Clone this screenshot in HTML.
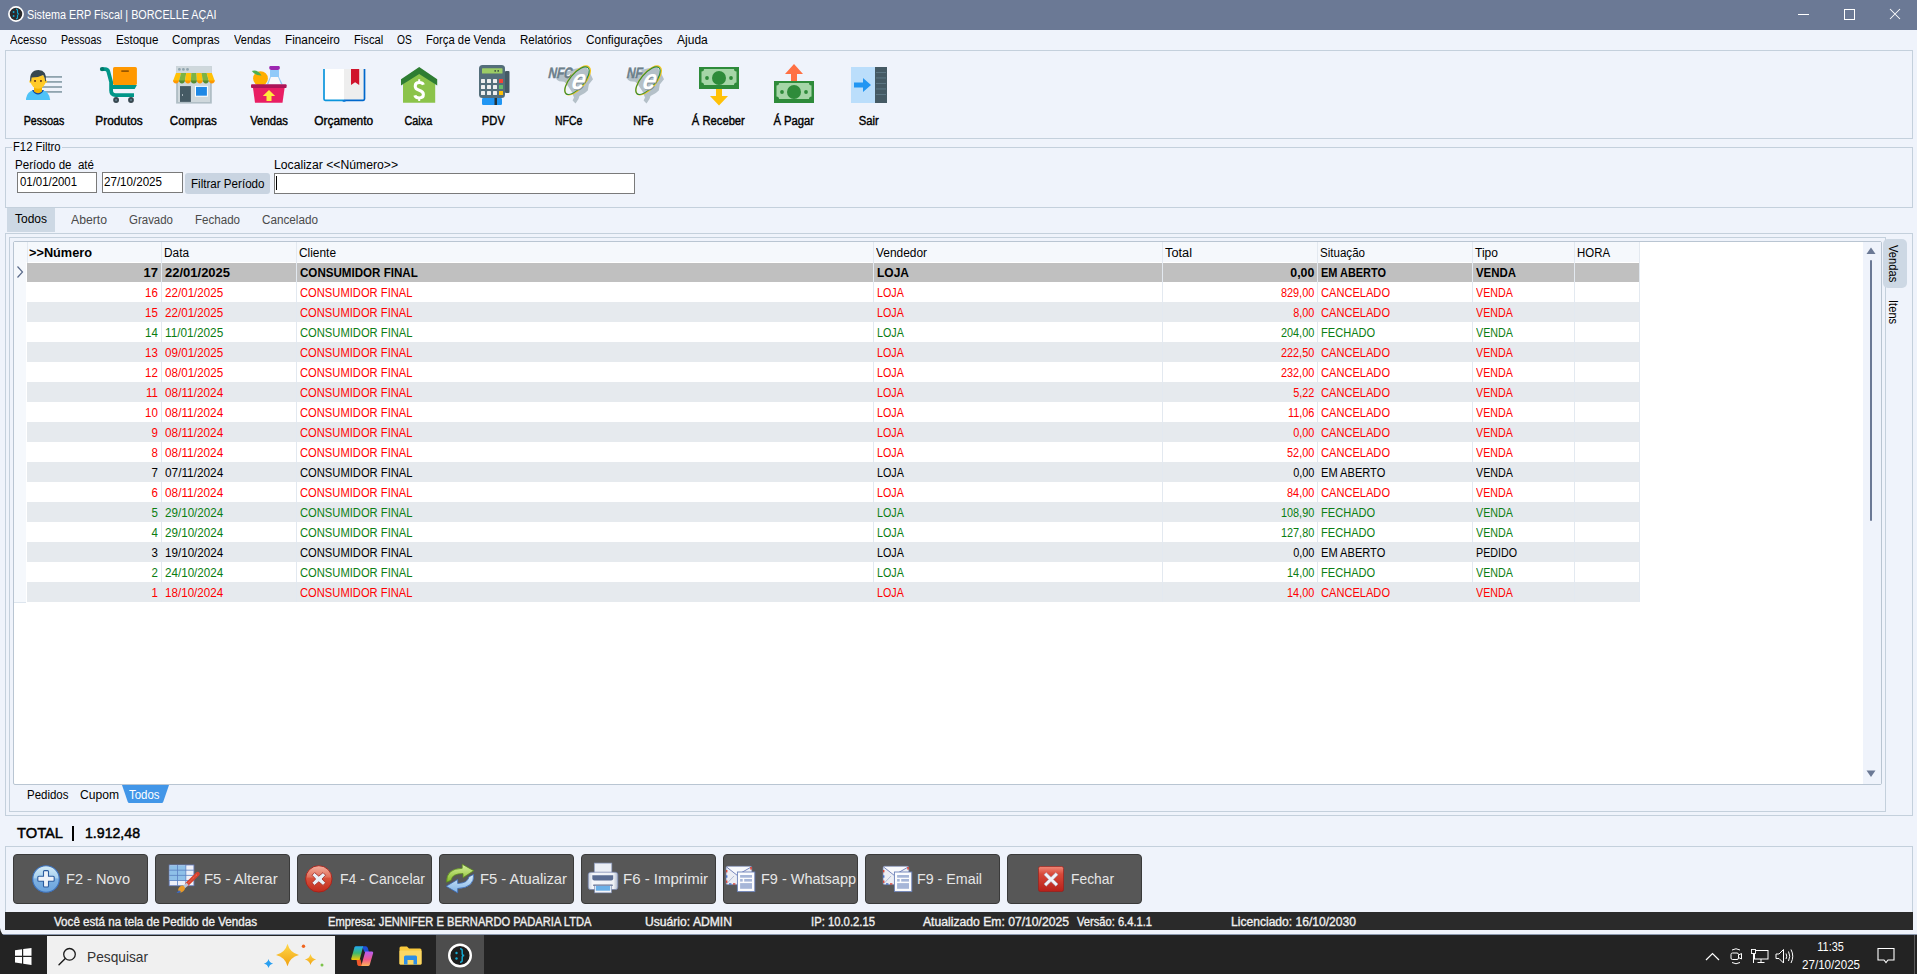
<!DOCTYPE html><html><head><meta charset="utf-8"><style>
html,body{margin:0;padding:0}
body{width:1917px;height:974px;position:relative;overflow:hidden;background:#eff3fb;font-family:"Liberation Sans",sans-serif}
.t{position:absolute;white-space:pre;line-height:1}
.r{position:absolute;box-sizing:border-box}
</style></head><body>
<div class="r" style="left:0px;top:0px;width:1917px;height:30px;background:#6b7995;"></div>
<svg class="r" style="left:7px;top:5px" width="18" height="18" viewBox="0 0 18 18"><circle cx="9" cy="9" r="7.1" fill="#2a2a2c" stroke="#fff" stroke-width="1.7"/><circle cx="6.6" cy="7" r="0.95" fill="#14a8d0"/><circle cx="6.6" cy="11" r="0.95" fill="#14a8d0"/><path d="M9 4.1 Q10.5 4.1 10.5 5.5 L10.5 7.5 Q10.5 8.9 12 9 Q10.5 9.1 10.5 10.5 L10.5 12.5 Q10.5 13.9 9 13.9" fill="none" stroke="#14a8d0" stroke-width="1.15"/></svg>
<span class="t" style="left:27px;top:8.84px;font-size:12px;font-weight:normal;color:#fff;transform:scaleX(0.9011);transform-origin:left top;">Sistema ERP Fiscal | BORCELLE AÇAI</span>
<div class="r" style="left:1798px;top:14px;width:11px;height:1px;background:#fff;"></div>
<div class="r" style="left:1844px;top:9px;width:11px;height:11px;border:1.1px solid #fff;box-sizing:border-box;"></div>
<svg class="r" style="left:1889px;top:8px" width="12" height="12" viewBox="0 0 12 12"><path d="M1 1 L11 11 M11 1 L1 11" stroke="#fff" stroke-width="1.05"/></svg>
<span class="t" style="left:10px;top:33.84px;font-size:12px;font-weight:normal;color:#000;transform:scaleX(0.9352);transform-origin:left top;">Acesso</span>
<span class="t" style="left:61.3px;top:33.84px;font-size:12px;font-weight:normal;color:#000;transform:scaleX(0.8822);transform-origin:left top;">Pessoas</span>
<span class="t" style="left:115.9px;top:33.84px;font-size:12px;font-weight:normal;color:#000;transform:scaleX(0.9607);transform-origin:left top;">Estoque</span>
<span class="t" style="left:172.3px;top:33.84px;font-size:12px;font-weight:normal;color:#000;transform:scaleX(0.9779);transform-origin:left top;">Compras</span>
<span class="t" style="left:234.1px;top:33.84px;font-size:12px;font-weight:normal;color:#000;transform:scaleX(0.9192);transform-origin:left top;">Vendas</span>
<span class="t" style="left:284.9px;top:33.84px;font-size:12px;font-weight:normal;color:#000;transform:scaleX(0.9800);transform-origin:left top;">Financeiro</span>
<span class="t" style="left:353.8px;top:33.84px;font-size:12px;font-weight:normal;color:#000;transform:scaleX(0.9351);transform-origin:left top;">Fiscal</span>
<span class="t" style="left:397.3px;top:33.84px;font-size:12px;font-weight:normal;color:#000;transform:scaleX(0.8536);transform-origin:left top;">OS</span>
<span class="t" style="left:426.4px;top:33.84px;font-size:12px;font-weight:normal;color:#000;transform:scaleX(0.9372);transform-origin:left top;">Força de Venda</span>
<span class="t" style="left:520.1px;top:33.84px;font-size:12px;font-weight:normal;color:#000;transform:scaleX(0.9589);transform-origin:left top;">Relatórios</span>
<span class="t" style="left:586.4px;top:33.84px;font-size:12px;font-weight:normal;color:#000;transform:scaleX(0.9874);transform-origin:left top;">Configurações</span>
<span class="t" style="left:677.1px;top:33.84px;font-size:12px;font-weight:normal;color:#000;">Ajuda</span>
<div class="r" style="left:5px;top:50px;width:1908px;height:89px;border:1px solid #c4d0dc;box-sizing:border-box;"></div>
<span class="t" style="left:20.588125px;top:114.64px;font-size:12px;font-weight:normal;color:#000;transform:scaleX(0.8800);transform-origin:center top;-webkit-text-stroke:0.4px #000;">Pessoas</span>
<span class="t" style="left:94.58687499999999px;top:114.64px;font-size:12px;font-weight:normal;color:#000;transform:scaleX(0.9890);transform-origin:center top;-webkit-text-stroke:0.4px #000;">Produtos</span>
<span class="t" style="left:169.2615625px;top:114.64px;font-size:12px;font-weight:normal;color:#000;transform:scaleX(0.9656);transform-origin:center top;-webkit-text-stroke:0.4px #000;">Compras</span>
<span class="t" style="left:248.58250000000004px;top:114.64px;font-size:12px;font-weight:normal;color:#000;transform:scaleX(0.9392);transform-origin:center top;-webkit-text-stroke:0.4px #000;">Vendas</span>
<span class="t" style="left:313.924375px;top:114.64px;font-size:12px;font-weight:normal;color:#000;transform:scaleX(0.9941);transform-origin:center top;-webkit-text-stroke:0.4px #000;">Orçamento</span>
<span class="t" style="left:403.260625px;top:114.64px;font-size:12px;font-weight:normal;color:#000;transform:scaleX(0.8996);transform-origin:center top;-webkit-text-stroke:0.4px #000;">Caixa</span>
<span class="t" style="left:481.26250000000005px;top:114.64px;font-size:12px;font-weight:normal;color:#000;transform:scaleX(0.9321);transform-origin:center top;-webkit-text-stroke:0.4px #000;">PDV</span>
<span class="t" style="left:552.9325px;top:114.64px;font-size:12px;font-weight:normal;color:#000;transform:scaleX(0.8744);transform-origin:center top;-webkit-text-stroke:0.4px #000;">NFCe</span>
<span class="t" style="left:632.265625px;top:114.64px;font-size:12px;font-weight:normal;color:#000;transform:scaleX(0.8999);transform-origin:center top;-webkit-text-stroke:0.4px #000;">NFe</span>
<span class="t" style="left:690.25375px;top:114.64px;font-size:12px;font-weight:normal;color:#000;transform:scaleX(0.9349);transform-origin:center top;-webkit-text-stroke:0.4px #000;">Á Receber</span>
<span class="t" style="left:771.92125px;top:114.64px;font-size:12px;font-weight:normal;color:#000;transform:scaleX(0.9364);transform-origin:center top;-webkit-text-stroke:0.4px #000;">Á Pagar</span>
<span class="t" style="left:857.9303125px;top:114.64px;font-size:12px;font-weight:normal;color:#000;transform:scaleX(0.9372);transform-origin:center top;-webkit-text-stroke:0.4px #000;">Sair</span>
<svg class="r" style="left:26px;top:70px" width="37" height="31" viewBox="0 0 37 31"><g fill="#90a4ae"><rect x="17" y="6" width="19" height="1.8"/><rect x="17" y="11" width="19" height="1.8"/><rect x="16" y="16.1" width="20" height="1.8"/><rect x="16" y="21" width="20" height="1.8"/></g>
<path d="M-0.2 30 Q0.5 21.5 8 20 L16 20 Q23.5 21.5 24.2 30 Z" fill="#4fc3f7"/><path d="M6 20.2 Q12 29 18 20.2 L16.5 20 Q12 25.2 7.5 20 Z" fill="#0d47a1"/>
<path d="M8 15 L16 15 L16 21.5 Q12 25 8 21.5 Z" fill="#f2b200"/>
<ellipse cx="12.1" cy="11.2" rx="7.4" ry="7.6" fill="#ffca28"/><ellipse cx="4.6" cy="11.5" rx="1.2" ry="1.8" fill="#ffca28"/><ellipse cx="19.6" cy="11.5" rx="1.2" ry="1.8" fill="#ffca28"/>
<path d="M4.2 11.5 Q3.2 0.2 12.5 0 Q21 0.3 20 11.2 L19.1 11.2 Q18.8 6.5 17 5 Q12.5 7.5 5.7 7.6 Q5.2 9.5 5.2 11.5 Z" fill="#37474f"/>
<rect x="8.1" y="10" width="1.9" height="1.9" fill="#784719"/><rect x="14" y="10" width="1.9" height="1.9" fill="#784719"/></svg>
<svg class="r" style="left:99px;top:66px" width="40" height="38" viewBox="0 0 40 38"><rect x="14" y="1" width="23.9" height="18" rx="1.6" fill="#ff9800"/><rect x="22.3" y="4.3" width="7.5" height="1.6" fill="#8d5000"/>
<path d="M3 3.1 L6 3.1 Q8.6 3.1 9.3 5.5 L12.1 16 L12.1 24.5 Q12.1 29.1 16.6 29.1 L35 29.1" fill="none" stroke="#009688" stroke-width="3.8"/>
<circle cx="3.1" cy="3.1" r="2.2" fill="#00796b"/><path d="M12 18.9 L37.9 18.9 L35.7 22.9 L12 22.9 Z" fill="#009688"/>
<circle cx="17.1" cy="34" r="2.9" fill="#37474f"/><circle cx="17.1" cy="34" r="1.1" fill="#607d8b"/><circle cx="32" cy="34" r="2.9" fill="#37474f"/><circle cx="32" cy="34" r="1.1" fill="#607d8b"/></svg>
<svg class="r" style="left:173px;top:66px" width="42" height="38" viewBox="0 0 42 38"><rect x="3.1" y="0.2" width="35.7" height="37.4" fill="#b0bec5"/><rect x="5" y="0.2" width="32" height="35.8" fill="#cfd8dc"/><rect x="3.1" y="0.2" width="35.7" height="6.8" fill="#cfd8dc"/>
<circle cx="6.4" cy="3.4" r="1.4" fill="#90a4ae"/><circle cx="10.4" cy="3.4" r="1.4" fill="#90a4ae"/><circle cx="14.5" cy="3.4" r="1.4" fill="#90a4ae"/><path d="M3.00 6.9 L8.11 6.9 L5.97 14.9 L0.00 14.9 Z" fill="#ffc107"/><path d="M0.00 14.6 A2.99 2.99 0 0 0 5.97 14.6 Z" fill="#ff9800"/><path d="M8.11 6.9 L13.23 6.9 L11.94 14.9 L5.97 14.9 Z" fill="#7cb342"/><path d="M5.97 14.6 A2.99 2.99 0 0 0 11.94 14.6 Z" fill="#558b2f"/><path d="M13.23 6.9 L18.34 6.9 L17.91 14.9 L11.94 14.9 Z" fill="#ffc107"/><path d="M11.94 14.6 A2.99 2.99 0 0 0 17.91 14.6 Z" fill="#ff9800"/><path d="M18.34 6.9 L23.46 6.9 L23.89 14.9 L17.91 14.9 Z" fill="#7cb342"/><path d="M17.91 14.6 A2.99 2.99 0 0 0 23.89 14.6 Z" fill="#558b2f"/><path d="M23.46 6.9 L28.57 6.9 L29.86 14.9 L23.89 14.9 Z" fill="#ffc107"/><path d="M23.89 14.6 A2.99 2.99 0 0 0 29.86 14.6 Z" fill="#ff9800"/><path d="M28.57 6.9 L33.69 6.9 L35.83 14.9 L29.86 14.9 Z" fill="#7cb342"/><path d="M29.86 14.6 A2.99 2.99 0 0 0 35.83 14.6 Z" fill="#558b2f"/><path d="M33.69 6.9 L38.80 6.9 L41.80 14.9 L35.83 14.9 Z" fill="#ffc107"/><path d="M35.83 14.6 A2.99 2.99 0 0 0 41.80 14.6 Z" fill="#ff9800"/>
<rect x="7" y="20.1" width="10.9" height="15.8" fill="#455a64"/><rect x="9.1" y="28" width="0.9" height="2" fill="#b0bec5"/>
<rect x="22" y="19.9" width="12.9" height="10.8" fill="#fff"/><rect x="23" y="20.9" width="10.9" height="8.8" fill="#1e88e5"/></svg>
<svg class="r" style="left:251px;top:66px" width="36" height="37" viewBox="0 0 36 37"><rect x="19" y="3.9" width="9" height="7.5" fill="#90caf9"/><path d="M19 11 L28 11 L31.6 18.3 L15.8 18.3 Z" fill="#90caf9"/><path d="M19.9 11 L27.1 11 L30 18.3 L17.4 18.3 Z" fill="#f8f8fa"/><rect x="18.2" y="-0.1" width="10.7" height="4" rx="1.8" fill="#9c27b0"/>
<circle cx="9.5" cy="12.6" r="7.4" fill="#ffae00"/><path d="M0.8 5 Q6.5 3.2 10.5 9.6 Q4.5 9.9 0.8 5 Z" fill="#4caf50"/>
<rect x="0" y="18.2" width="35.6" height="3.9" rx="1" fill="#ad1457"/><path d="M2 22 L33.6 22 L31.5 36.8 L4 36.8 Z" fill="#e91e63"/>
<path d="M18 24 L24.2 30 L20.5 30 L20.5 35 L15.5 35 L15.5 30 L11.8 30 Z" fill="#ffeb3b"/></svg>
<svg class="r" style="left:323px;top:68px" width="43" height="35" viewBox="0 0 43 35"><path d="M1 1 L1 32 L21 32 L21 1 Z" fill="#fff"/><path d="M21 1 L41.5 1 L41.5 32 L21 32 Z" fill="#eeeeee"/>
<path d="M1 1 L1 31 Q1 32.3 2.3 32.3 L21 32.3" fill="none" stroke="#0b95dc" stroke-width="1.7"/><path d="M21 32.3 L40.2 32.3 Q41.5 32.3 41.5 31 L41.5 1" fill="none" stroke="#0068cc" stroke-width="1.7"/><rect x="19.5" y="32" width="3.2" height="1.8" rx="0.8" fill="#0a7ad8"/>
<path d="M28 1 L36.2 1 L36.2 17 L32.1 14.2 L28 17 Z" fill="#d0142c"/></svg>
<svg class="r" style="left:401px;top:67px" width="37" height="36" viewBox="0 0 37 36"><path d="M2 17 L18.2 4.5 L34.2 17 L34.2 35.8 L2 35.8 Z" fill="#8bc34a"/><path d="M0 12.2 L18.2 0 L36.2 12.2 L36.2 18.5 L18.2 7 L0 18.5 Z" fill="#2e7d32"/>
<path d="M22.4 17.8 Q21.6 15.6 18.2 15.6 Q14.2 15.6 14.2 19.2 Q14.2 22.1 18.2 23.2 Q22.4 24.4 22.4 27.6 Q22.4 31 18.2 31 Q14.5 31 13.8 28.4" fill="none" stroke="#fff" stroke-width="3"/><path d="M18.2 12.2 V16 M18.2 30.6 V34" stroke="#fff" stroke-width="2"/></svg>
<svg class="r" style="left:479px;top:64.5px" width="32" height="41" viewBox="0 0 32 41"><rect x="26" y="6" width="4.5" height="22" rx="1" fill="#455a64"/><rect x="0" y="0" width="26" height="33" rx="3.5" fill="#546e7a"/><rect x="3" y="3.3" width="20.5" height="5.3" rx="0.6" fill="#9ccc65"/><rect x="15.5" y="5.2" width="1.4" height="1.4" fill="#263238"/><rect x="18.5" y="5.2" width="1.4" height="1.4" fill="#263238"/>
<g fill="#eeeeee"><rect x="2" y="14" width="4" height="4" rx="0.5"/><rect x="8" y="14" width="4" height="4" rx="0.5"/><rect x="14" y="14" width="4" height="4" rx="0.5"/><rect x="2" y="20" width="4" height="4" rx="0.5"/><rect x="8" y="20" width="4" height="4" rx="0.5"/><rect x="14" y="20" width="4" height="4" rx="0.5"/><rect x="2" y="26" width="4" height="4" rx="0.5"/><rect x="8" y="26" width="4" height="4" rx="0.5"/><rect x="14" y="26" width="4" height="4" rx="0.5"/></g>
<rect x="20" y="14" width="4" height="4" fill="#f44336"/><rect x="20" y="20" width="4" height="4" fill="#66bb6a"/><rect x="20" y="26" width="4" height="4" fill="#ffc107"/>
<rect x="3" y="33" width="20" height="7" rx="1.2" fill="#2196f3"/><rect x="15.5" y="33" width="2.5" height="7" fill="#263238"/></svg>
<svg class="r" style="left:545px;top:65px" width="50" height="40" viewBox="0 0 50 40"><path d="M11.3 12.7 L11.8 14.7 L14.2 16.2 L19.2 16.7 L20.7 18.2 L22.6 20.6 L26.6 26.5 L29 32.5 L27.6 35.4 L30.5 38.4 L33.5 33.9 L34.5 31 L39.9 28 L42.8 25.6 L43.8 19.6 L48 14.2 L45 8 L41.4 2.4 L36 2.5 L29 3.9 L24 6 L17 7 L11.3 11.3 Z" fill="#b4c0c8"/><text transform="translate(2.5 12.5) skewX(-12) scale(0.8 1)" x="-0.8" y="-0.5" style="font-family:'Liberation Sans';font-weight:bold" font-size="15" fill="#ffffff" letter-spacing="-0.3">NFC</text><text transform="translate(2.5 12.5) skewX(-12) scale(0.8 1)" x="0" y="0" style="font-family:'Liberation Sans';font-weight:bold" font-size="15" fill="#6c808c" stroke="#6c808c" stroke-width="0.4" letter-spacing="-0.3">NFC</text><ellipse cx="32.6" cy="15.4" rx="7.6" ry="17.6" transform="rotate(40 32.6 15.4)" fill="none" stroke="#f5c518" stroke-width="1.3"/><ellipse cx="32" cy="15.7" rx="7.1" ry="17" transform="rotate(40 32 15.7)" fill="none" stroke="#2e8b3a" stroke-width="1.1"/><text transform="translate(25.5 24) skewX(-14) scale(0.85 1)" x="1" y="0.8" style="font-family:'Liberation Sans';font-weight:bold;font-style:italic" font-size="28" fill="#7d8f9a">e</text><text transform="translate(25.5 24) skewX(-14) scale(0.85 1)" x="0" y="0" style="font-family:'Liberation Sans';font-weight:bold;font-style:italic" font-size="28" fill="#fff">e</text></svg>
<svg class="r" style="left:616px;top:65px" width="50" height="40" viewBox="0 0 50 40"><path d="M11.3 12.7 L11.8 14.7 L14.2 16.2 L19.2 16.7 L20.7 18.2 L22.6 20.6 L26.6 26.5 L29 32.5 L27.6 35.4 L30.5 38.4 L33.5 33.9 L34.5 31 L39.9 28 L42.8 25.6 L43.8 19.6 L48 14.2 L45 8 L41.4 2.4 L36 2.5 L29 3.9 L24 6 L17 7 L11.3 11.3 Z" fill="#b4c0c8"/><text transform="translate(10 12.5) skewX(-12) scale(0.8 1)" x="-0.8" y="-0.5" style="font-family:'Liberation Sans';font-weight:bold" font-size="15" fill="#ffffff" letter-spacing="-0.3">NF</text><text transform="translate(10 12.5) skewX(-12) scale(0.8 1)" x="0" y="0" style="font-family:'Liberation Sans';font-weight:bold" font-size="15" fill="#6c808c" stroke="#6c808c" stroke-width="0.4" letter-spacing="-0.3">NF</text><ellipse cx="32.6" cy="15.4" rx="7.6" ry="17.6" transform="rotate(40 32.6 15.4)" fill="none" stroke="#f5c518" stroke-width="1.3"/><ellipse cx="32" cy="15.7" rx="7.1" ry="17" transform="rotate(40 32 15.7)" fill="none" stroke="#2e8b3a" stroke-width="1.1"/><text transform="translate(25.5 24) skewX(-14) scale(0.85 1)" x="1" y="0.8" style="font-family:'Liberation Sans';font-weight:bold;font-style:italic" font-size="28" fill="#7d8f9a">e</text><text transform="translate(25.5 24) skewX(-14) scale(0.85 1)" x="0" y="0" style="font-family:'Liberation Sans';font-weight:bold;font-style:italic" font-size="28" fill="#fff">e</text></svg>
<svg class="r" style="left:698.5px;top:66.5px" width="40" height="40" viewBox="0 0 40 40"><rect x="0" y="0" width="40" height="22" fill="#2e8b3a"/><path d="M5 2 l30 0 a2.5 2.5 0 0 0 2.5 2.5 l0 11 a2.5 2.5 0 0 0 -2.5 2.5 l-30 0 a2.5 2.5 0 0 0 -2.5 -2.5 l0 -11 a2.5 2.5 0 0 0 2.5 -2.5 Z" fill="#a5d6a7"/><circle cx="20" cy="11" r="7" fill="#2e8b3a"/><circle cx="8" cy="11" r="1.9" fill="#2e8b3a"/><circle cx="32" cy="11" r="1.9" fill="#2e8b3a"/><path d="M17 22 L23 22 L23 29 L29 29 L20 38.5 L11 29 L17 29 Z" fill="#ffc107"/></svg>
<svg class="r" style="left:773.5px;top:63.5px" width="40" height="40" viewBox="0 0 40 40"><rect x="0" y="17" width="40" height="22" fill="#2e8b3a"/><path d="M5 19 l30 0 a2.5 2.5 0 0 0 2.5 2.5 l0 11 a2.5 2.5 0 0 0 -2.5 2.5 l-30 0 a2.5 2.5 0 0 0 -2.5 -2.5 l0 -11 a2.5 2.5 0 0 0 2.5 -2.5 Z" fill="#a5d6a7"/><circle cx="20" cy="28" r="7" fill="#2e8b3a"/><circle cx="8" cy="28" r="1.9" fill="#2e8b3a"/><circle cx="32" cy="28" r="1.9" fill="#2e8b3a"/><path d="M17 17 L23 17 L23 10 L29 10 L20 0 L11 10 L17 10 Z" fill="#ff7043"/></svg>
<svg class="r" style="left:851px;top:64.5px" width="37" height="40" viewBox="0 0 37 40"><rect x="0" y="2" width="24" height="36" fill="#bbdefb"/><rect x="24" y="2" width="12" height="36" fill="#455a64"/><g fill="#5f7a87"><rect x="25" y="7" width="10" height="0.9"/><rect x="25" y="12.5" width="10" height="0.9"/><rect x="25" y="18" width="10" height="0.9"/><rect x="25" y="23.5" width="10" height="0.9"/><rect x="25" y="29" width="10" height="0.9"/></g>
<path d="M3 17.5 L12 17.5 L12 13 L20 20 L12 27 L12 22.5 L3 22.5 Z" fill="#2196f3"/></svg>
<div class="r" style="left:5px;top:147px;width:1908px;height:61px;border:1px solid #c4d0dc;box-sizing:border-box;"></div>
<div class="r" style="left:12px;top:142px;width:50px;height:10px;background:#eff3fb;"></div>
<span class="t" style="left:13px;top:140.84px;font-size:12px;font-weight:normal;color:#000;transform:scaleX(0.9374);transform-origin:left top;">F12 Filtro</span>
<span class="t" style="left:15px;top:158.54px;font-size:12px;font-weight:normal;color:#000;transform:scaleX(0.9628);transform-origin:left top;">Período de  até</span>
<div class="r" style="left:17px;top:172px;width:80px;height:21px;background:#fff;border:1px solid #7a7a7a;box-sizing:border-box;"></div>
<span class="t" style="left:19.5px;top:175.84px;font-size:12px;font-weight:normal;color:#000;transform:scaleX(0.9492);transform-origin:left top;">01/01/2001</span>
<div class="r" style="left:102px;top:172px;width:81px;height:21px;background:#fff;border:1px solid #7a7a7a;box-sizing:border-box;"></div>
<span class="t" style="left:104px;top:175.84px;font-size:12px;font-weight:normal;color:#000;transform:scaleX(0.9658);transform-origin:left top;">27/10/2025</span>
<div class="r" style="left:185px;top:173px;width:85px;height:21px;background:#c9d4e1;border-radius:3px;"></div>
<span class="t" style="left:191px;top:178.34px;font-size:12px;font-weight:normal;color:#000;transform:scaleX(0.9669);transform-origin:left top;">Filtrar Período</span>
<span class="t" style="left:274px;top:158.54px;font-size:12px;font-weight:normal;color:#000;transform:scaleX(1.0158);transform-origin:left top;">Localizar &lt;&lt;Número&gt;&gt;</span>
<div class="r" style="left:274px;top:173px;width:361px;height:21px;background:#fff;border:1px solid #7a7a7a;box-sizing:border-box;"></div>
<div class="r" style="left:276px;top:176px;width:1px;height:14px;background:#000;"></div>
<div class="r" style="left:7px;top:208px;width:48px;height:24px;background:#cdd8e4;"></div>
<span class="t" style="left:15px;top:212.84px;font-size:12px;font-weight:normal;color:#000;">Todos</span>
<span class="t" style="left:71px;top:213.84px;font-size:12px;font-weight:normal;color:#4a4a4a;transform:scaleX(1.0183);transform-origin:left top;">Aberto</span>
<span class="t" style="left:129px;top:213.84px;font-size:12px;font-weight:normal;color:#4a4a4a;transform:scaleX(0.9561);transform-origin:left top;">Gravado</span>
<span class="t" style="left:195px;top:213.84px;font-size:12px;font-weight:normal;color:#4a4a4a;transform:scaleX(0.9637);transform-origin:left top;">Fechado</span>
<span class="t" style="left:262px;top:213.84px;font-size:12px;font-weight:normal;color:#4a4a4a;transform:scaleX(0.9761);transform-origin:left top;">Cancelado</span>
<div class="r" style="left:5px;top:233px;width:1908px;height:583px;border:1px solid #c4d0dc;box-sizing:border-box;"></div>
<div class="r" style="left:9px;top:237px;width:1877px;height:575px;border:1px solid #c4d0dc;box-sizing:border-box;"></div>
<div class="r" style="left:13px;top:241px;width:1869px;height:544px;background:#fff;border:1px solid #b9c5d2;box-sizing:border-box;border-radius:2px;"></div>
<div class="r" style="left:1863px;top:242px;width:18px;height:542px;background:#eff3fb;"></div>
<svg class="r" style="left:1866px;top:247px" width="10" height="8" viewBox="0 0 10 8"><path d="M5 0.5 L9.5 7 L0.5 7 Z" fill="#6b7995"/></svg>
<div class="r" style="left:1870px;top:260px;width:2px;height:261px;background:#6b7995;border-radius:1px;"></div>
<svg class="r" style="left:1866px;top:770px" width="10" height="8" viewBox="0 0 10 8"><path d="M0.5 0.5 L9.5 0.5 L5 7 Z" fill="#6b7995"/></svg>
<div class="r" style="left:1883px;top:239px;width:24px;height:49px;background:#cdd8e4;border-radius:5px;"></div>
<span class="t" style="left:1881.5px;top:245px;font-size:12px;color:#000;writing-mode:vertical-rl;line-height:22px;width:22px;transform:scaleY(0.93);transform-origin:top">Vendas</span>
<span class="t" style="left:1881.5px;top:300.2px;font-size:12px;color:#000;writing-mode:vertical-rl;line-height:22px;width:22px;transform:scaleY(0.93);transform-origin:top">Itens</span>
<div class="r" style="left:14px;top:242px;width:1625px;height:20px;background:#f5f8fc;"></div>
<div class="r" style="left:27px;top:242px;width:1px;height:360px;background:#e3e9f0;"></div>
<div class="r" style="left:161px;top:242px;width:1px;height:360px;background:#e3e9f0;"></div>
<div class="r" style="left:296px;top:242px;width:1px;height:360px;background:#e3e9f0;"></div>
<div class="r" style="left:873px;top:242px;width:1px;height:360px;background:#e3e9f0;"></div>
<div class="r" style="left:1162px;top:242px;width:1px;height:360px;background:#e3e9f0;"></div>
<div class="r" style="left:1317px;top:242px;width:1px;height:360px;background:#e3e9f0;"></div>
<div class="r" style="left:1472px;top:242px;width:1px;height:360px;background:#e3e9f0;"></div>
<div class="r" style="left:1574px;top:242px;width:1px;height:360px;background:#e3e9f0;"></div>
<div class="r" style="left:1639px;top:242px;width:1px;height:360px;background:#e3e9f0;"></div>
<span class="t" style="left:29px;top:246.84px;font-size:12px;font-weight:bold;color:#000;transform:scaleX(1.0614);transform-origin:left top;">&gt;&gt;Número</span>
<span class="t" style="left:164px;top:246.84px;font-size:12px;font-weight:normal;color:#000;transform:scaleX(0.9863);transform-origin:left top;">Data</span>
<span class="t" style="left:299px;top:246.84px;font-size:12px;font-weight:normal;color:#000;transform:scaleX(0.9906);transform-origin:left top;">Cliente</span>
<span class="t" style="left:876px;top:246.84px;font-size:12px;font-weight:normal;color:#000;transform:scaleX(0.9927);transform-origin:left top;">Vendedor</span>
<span class="t" style="left:1165px;top:246.84px;font-size:12px;font-weight:normal;color:#000;transform:scaleX(1.0652);transform-origin:left top;">Total</span>
<span class="t" style="left:1320px;top:246.84px;font-size:12px;font-weight:normal;color:#000;transform:scaleX(0.9637);transform-origin:left top;">Situação</span>
<span class="t" style="left:1475px;top:246.84px;font-size:12px;font-weight:normal;color:#000;">Tipo</span>
<span class="t" style="left:1577px;top:246.84px;font-size:12px;font-weight:normal;color:#000;transform:scaleX(0.9518);transform-origin:left top;">HORA</span>
<div class="r" style="left:14px;top:262px;width:12px;height:20px;background:#f5f8fc;"></div>
<div class="r" style="left:14px;top:282px;width:12px;height:1px;background:#dde5ee;"></div>
<div class="r" style="left:27px;top:263px;width:134px;height:19px;background:#c0c0c0;"></div>
<div class="r" style="left:162px;top:263px;width:134px;height:19px;background:#c0c0c0;"></div>
<div class="r" style="left:297px;top:263px;width:576px;height:19px;background:#c0c0c0;"></div>
<div class="r" style="left:874px;top:263px;width:288px;height:19px;background:#c0c0c0;"></div>
<div class="r" style="left:1163px;top:263px;width:154px;height:19px;background:#c0c0c0;"></div>
<div class="r" style="left:1318px;top:263px;width:154px;height:19px;background:#c0c0c0;"></div>
<div class="r" style="left:1473px;top:263px;width:101px;height:19px;background:#c0c0c0;"></div>
<div class="r" style="left:1575px;top:263px;width:64px;height:19px;background:#c0c0c0;"></div>
<span class="t" style="left:143.5415625px;top:266.10px;font-size:13px;font-weight:bold;color:#000;">17</span>
<span class="t" style="left:165px;top:266.10px;font-size:13px;font-weight:bold;color:#000;">22/01/2025</span>
<span class="t" style="left:300px;top:266.10px;font-size:13px;font-weight:bold;color:#000;transform:scaleX(0.8914);transform-origin:left top;">CONSUMIDOR FINAL</span>
<span class="t" style="left:877px;top:266.10px;font-size:13px;font-weight:bold;color:#000;transform:scaleX(0.9230);transform-origin:left top;">LOJA</span>
<span class="t" style="left:1288.70078125px;top:266.10px;font-size:13px;font-weight:bold;color:#000;transform:scaleX(0.9486);transform-origin:right top;">0,00</span>
<span class="t" style="left:1321px;top:266.10px;font-size:13px;font-weight:bold;color:#000;transform:scaleX(0.8411);transform-origin:left top;">EM ABERTO</span>
<span class="t" style="left:1476px;top:266.10px;font-size:13px;font-weight:bold;color:#000;transform:scaleX(0.8790);transform-origin:left top;">VENDA</span>
<div class="r" style="left:14px;top:282px;width:12px;height:20px;background:#f5f8fc;"></div>
<div class="r" style="left:14px;top:302px;width:12px;height:1px;background:#dde5ee;"></div>
<div class="r" style="left:27px;top:282px;width:134px;height:20px;background:#ffffff;"></div>
<div class="r" style="left:162px;top:282px;width:134px;height:20px;background:#ffffff;"></div>
<div class="r" style="left:297px;top:282px;width:576px;height:20px;background:#ffffff;"></div>
<div class="r" style="left:874px;top:282px;width:288px;height:20px;background:#ffffff;"></div>
<div class="r" style="left:1163px;top:282px;width:154px;height:20px;background:#ffffff;"></div>
<div class="r" style="left:1318px;top:282px;width:154px;height:20px;background:#ffffff;"></div>
<div class="r" style="left:1473px;top:282px;width:101px;height:20px;background:#ffffff;"></div>
<div class="r" style="left:1575px;top:282px;width:64px;height:20px;background:#ffffff;"></div>
<span class="t" style="left:144.09765625px;top:286.52px;font-size:12.5px;font-weight:normal;color:#ff0000;transform:scaleX(0.9200);transform-origin:right top;">16</span>
<span class="t" style="left:165px;top:286.52px;font-size:12.5px;font-weight:normal;color:#ff0000;transform:scaleX(0.9304);transform-origin:left top;">22/01/2025</span>
<span class="t" style="left:300px;top:286.52px;font-size:12.5px;font-weight:normal;color:#ff0000;transform:scaleX(0.8950);transform-origin:left top;">CONSUMIDOR FINAL</span>
<span class="t" style="left:877px;top:286.52px;font-size:12.5px;font-weight:normal;color:#ff0000;transform:scaleX(0.8573);transform-origin:left top;">LOJA</span>
<span class="t" style="left:1275.771484375px;top:286.52px;font-size:12.5px;font-weight:normal;color:#ff0000;transform:scaleX(0.8700);transform-origin:right top;">829,00</span>
<span class="t" style="left:1321px;top:286.52px;font-size:12.5px;font-weight:normal;color:#ff0000;transform:scaleX(0.8870);transform-origin:left top;">CANCELADO</span>
<span class="t" style="left:1476px;top:286.52px;font-size:12.5px;font-weight:normal;color:#ff0000;transform:scaleX(0.8550);transform-origin:left top;">VENDA</span>
<div class="r" style="left:14px;top:302px;width:12px;height:20px;background:#f5f8fc;"></div>
<div class="r" style="left:14px;top:322px;width:12px;height:1px;background:#dde5ee;"></div>
<div class="r" style="left:27px;top:302px;width:134px;height:20px;background:#e6eaee;"></div>
<div class="r" style="left:162px;top:302px;width:134px;height:20px;background:#e6eaee;"></div>
<div class="r" style="left:297px;top:302px;width:576px;height:20px;background:#e6eaee;"></div>
<div class="r" style="left:874px;top:302px;width:288px;height:20px;background:#e6eaee;"></div>
<div class="r" style="left:1163px;top:302px;width:154px;height:20px;background:#e6eaee;"></div>
<div class="r" style="left:1318px;top:302px;width:154px;height:20px;background:#e6eaee;"></div>
<div class="r" style="left:1473px;top:302px;width:101px;height:20px;background:#e6eaee;"></div>
<div class="r" style="left:1575px;top:302px;width:64px;height:20px;background:#e6eaee;"></div>
<span class="t" style="left:144.09765625px;top:306.52px;font-size:12.5px;font-weight:normal;color:#ff0000;transform:scaleX(0.9200);transform-origin:right top;">15</span>
<span class="t" style="left:165px;top:306.52px;font-size:12.5px;font-weight:normal;color:#ff0000;transform:scaleX(0.9304);transform-origin:left top;">22/01/2025</span>
<span class="t" style="left:300px;top:306.52px;font-size:12.5px;font-weight:normal;color:#ff0000;transform:scaleX(0.8950);transform-origin:left top;">CONSUMIDOR FINAL</span>
<span class="t" style="left:877px;top:306.52px;font-size:12.5px;font-weight:normal;color:#ff0000;transform:scaleX(0.8573);transform-origin:left top;">LOJA</span>
<span class="t" style="left:1289.673828125px;top:306.52px;font-size:12.5px;font-weight:normal;color:#ff0000;transform:scaleX(0.8700);transform-origin:right top;">8,00</span>
<span class="t" style="left:1321px;top:306.52px;font-size:12.5px;font-weight:normal;color:#ff0000;transform:scaleX(0.8870);transform-origin:left top;">CANCELADO</span>
<span class="t" style="left:1476px;top:306.52px;font-size:12.5px;font-weight:normal;color:#ff0000;transform:scaleX(0.8550);transform-origin:left top;">VENDA</span>
<div class="r" style="left:14px;top:322px;width:12px;height:20px;background:#f5f8fc;"></div>
<div class="r" style="left:14px;top:342px;width:12px;height:1px;background:#dde5ee;"></div>
<div class="r" style="left:27px;top:322px;width:134px;height:20px;background:#ffffff;"></div>
<div class="r" style="left:162px;top:322px;width:134px;height:20px;background:#ffffff;"></div>
<div class="r" style="left:297px;top:322px;width:576px;height:20px;background:#ffffff;"></div>
<div class="r" style="left:874px;top:322px;width:288px;height:20px;background:#ffffff;"></div>
<div class="r" style="left:1163px;top:322px;width:154px;height:20px;background:#ffffff;"></div>
<div class="r" style="left:1318px;top:322px;width:154px;height:20px;background:#ffffff;"></div>
<div class="r" style="left:1473px;top:322px;width:101px;height:20px;background:#ffffff;"></div>
<div class="r" style="left:1575px;top:322px;width:64px;height:20px;background:#ffffff;"></div>
<span class="t" style="left:144.09765625px;top:326.52px;font-size:12.5px;font-weight:normal;color:#0b7d12;transform:scaleX(0.9200);transform-origin:right top;">14</span>
<span class="t" style="left:165px;top:326.52px;font-size:12.5px;font-weight:normal;color:#0b7d12;transform:scaleX(0.9444);transform-origin:left top;">11/01/2025</span>
<span class="t" style="left:300px;top:326.52px;font-size:12.5px;font-weight:normal;color:#0b7d12;transform:scaleX(0.8950);transform-origin:left top;">CONSUMIDOR FINAL</span>
<span class="t" style="left:877px;top:326.52px;font-size:12.5px;font-weight:normal;color:#0b7d12;transform:scaleX(0.8573);transform-origin:left top;">LOJA</span>
<span class="t" style="left:1275.771484375px;top:326.52px;font-size:12.5px;font-weight:normal;color:#0b7d12;transform:scaleX(0.8700);transform-origin:right top;">204,00</span>
<span class="t" style="left:1321px;top:326.52px;font-size:12.5px;font-weight:normal;color:#0b7d12;transform:scaleX(0.8870);transform-origin:left top;">FECHADO</span>
<span class="t" style="left:1476px;top:326.52px;font-size:12.5px;font-weight:normal;color:#0b7d12;transform:scaleX(0.8550);transform-origin:left top;">VENDA</span>
<div class="r" style="left:14px;top:342px;width:12px;height:20px;background:#f5f8fc;"></div>
<div class="r" style="left:14px;top:362px;width:12px;height:1px;background:#dde5ee;"></div>
<div class="r" style="left:27px;top:342px;width:134px;height:20px;background:#e6eaee;"></div>
<div class="r" style="left:162px;top:342px;width:134px;height:20px;background:#e6eaee;"></div>
<div class="r" style="left:297px;top:342px;width:576px;height:20px;background:#e6eaee;"></div>
<div class="r" style="left:874px;top:342px;width:288px;height:20px;background:#e6eaee;"></div>
<div class="r" style="left:1163px;top:342px;width:154px;height:20px;background:#e6eaee;"></div>
<div class="r" style="left:1318px;top:342px;width:154px;height:20px;background:#e6eaee;"></div>
<div class="r" style="left:1473px;top:342px;width:101px;height:20px;background:#e6eaee;"></div>
<div class="r" style="left:1575px;top:342px;width:64px;height:20px;background:#e6eaee;"></div>
<span class="t" style="left:144.09765625px;top:346.52px;font-size:12.5px;font-weight:normal;color:#ff0000;transform:scaleX(0.9200);transform-origin:right top;">13</span>
<span class="t" style="left:165px;top:346.52px;font-size:12.5px;font-weight:normal;color:#ff0000;transform:scaleX(0.9304);transform-origin:left top;">09/01/2025</span>
<span class="t" style="left:300px;top:346.52px;font-size:12.5px;font-weight:normal;color:#ff0000;transform:scaleX(0.8950);transform-origin:left top;">CONSUMIDOR FINAL</span>
<span class="t" style="left:877px;top:346.52px;font-size:12.5px;font-weight:normal;color:#ff0000;transform:scaleX(0.8573);transform-origin:left top;">LOJA</span>
<span class="t" style="left:1275.771484375px;top:346.52px;font-size:12.5px;font-weight:normal;color:#ff0000;transform:scaleX(0.8700);transform-origin:right top;">222,50</span>
<span class="t" style="left:1321px;top:346.52px;font-size:12.5px;font-weight:normal;color:#ff0000;transform:scaleX(0.8870);transform-origin:left top;">CANCELADO</span>
<span class="t" style="left:1476px;top:346.52px;font-size:12.5px;font-weight:normal;color:#ff0000;transform:scaleX(0.8550);transform-origin:left top;">VENDA</span>
<div class="r" style="left:14px;top:362px;width:12px;height:20px;background:#f5f8fc;"></div>
<div class="r" style="left:14px;top:382px;width:12px;height:1px;background:#dde5ee;"></div>
<div class="r" style="left:27px;top:362px;width:134px;height:20px;background:#ffffff;"></div>
<div class="r" style="left:162px;top:362px;width:134px;height:20px;background:#ffffff;"></div>
<div class="r" style="left:297px;top:362px;width:576px;height:20px;background:#ffffff;"></div>
<div class="r" style="left:874px;top:362px;width:288px;height:20px;background:#ffffff;"></div>
<div class="r" style="left:1163px;top:362px;width:154px;height:20px;background:#ffffff;"></div>
<div class="r" style="left:1318px;top:362px;width:154px;height:20px;background:#ffffff;"></div>
<div class="r" style="left:1473px;top:362px;width:101px;height:20px;background:#ffffff;"></div>
<div class="r" style="left:1575px;top:362px;width:64px;height:20px;background:#ffffff;"></div>
<span class="t" style="left:144.09765625px;top:366.52px;font-size:12.5px;font-weight:normal;color:#ff0000;transform:scaleX(0.9200);transform-origin:right top;">12</span>
<span class="t" style="left:165px;top:366.52px;font-size:12.5px;font-weight:normal;color:#ff0000;transform:scaleX(0.9304);transform-origin:left top;">08/01/2025</span>
<span class="t" style="left:300px;top:366.52px;font-size:12.5px;font-weight:normal;color:#ff0000;transform:scaleX(0.8950);transform-origin:left top;">CONSUMIDOR FINAL</span>
<span class="t" style="left:877px;top:366.52px;font-size:12.5px;font-weight:normal;color:#ff0000;transform:scaleX(0.8573);transform-origin:left top;">LOJA</span>
<span class="t" style="left:1275.771484375px;top:366.52px;font-size:12.5px;font-weight:normal;color:#ff0000;transform:scaleX(0.8700);transform-origin:right top;">232,00</span>
<span class="t" style="left:1321px;top:366.52px;font-size:12.5px;font-weight:normal;color:#ff0000;transform:scaleX(0.8870);transform-origin:left top;">CANCELADO</span>
<span class="t" style="left:1476px;top:366.52px;font-size:12.5px;font-weight:normal;color:#ff0000;transform:scaleX(0.8550);transform-origin:left top;">VENDA</span>
<div class="r" style="left:14px;top:382px;width:12px;height:20px;background:#f5f8fc;"></div>
<div class="r" style="left:14px;top:402px;width:12px;height:1px;background:#dde5ee;"></div>
<div class="r" style="left:27px;top:382px;width:134px;height:20px;background:#e6eaee;"></div>
<div class="r" style="left:162px;top:382px;width:134px;height:20px;background:#e6eaee;"></div>
<div class="r" style="left:297px;top:382px;width:576px;height:20px;background:#e6eaee;"></div>
<div class="r" style="left:874px;top:382px;width:288px;height:20px;background:#e6eaee;"></div>
<div class="r" style="left:1163px;top:382px;width:154px;height:20px;background:#e6eaee;"></div>
<div class="r" style="left:1318px;top:382px;width:154px;height:20px;background:#e6eaee;"></div>
<div class="r" style="left:1473px;top:382px;width:101px;height:20px;background:#e6eaee;"></div>
<div class="r" style="left:1575px;top:382px;width:64px;height:20px;background:#e6eaee;"></div>
<span class="t" style="left:145.025390625px;top:386.52px;font-size:12.5px;font-weight:normal;color:#ff0000;transform:scaleX(0.9200);transform-origin:right top;">11</span>
<span class="t" style="left:165px;top:386.52px;font-size:12.5px;font-weight:normal;color:#ff0000;transform:scaleX(0.9444);transform-origin:left top;">08/11/2024</span>
<span class="t" style="left:300px;top:386.52px;font-size:12.5px;font-weight:normal;color:#ff0000;transform:scaleX(0.8950);transform-origin:left top;">CONSUMIDOR FINAL</span>
<span class="t" style="left:877px;top:386.52px;font-size:12.5px;font-weight:normal;color:#ff0000;transform:scaleX(0.8573);transform-origin:left top;">LOJA</span>
<span class="t" style="left:1289.673828125px;top:386.52px;font-size:12.5px;font-weight:normal;color:#ff0000;transform:scaleX(0.8700);transform-origin:right top;">5,22</span>
<span class="t" style="left:1321px;top:386.52px;font-size:12.5px;font-weight:normal;color:#ff0000;transform:scaleX(0.8870);transform-origin:left top;">CANCELADO</span>
<span class="t" style="left:1476px;top:386.52px;font-size:12.5px;font-weight:normal;color:#ff0000;transform:scaleX(0.8550);transform-origin:left top;">VENDA</span>
<div class="r" style="left:14px;top:402px;width:12px;height:20px;background:#f5f8fc;"></div>
<div class="r" style="left:14px;top:422px;width:12px;height:1px;background:#dde5ee;"></div>
<div class="r" style="left:27px;top:402px;width:134px;height:20px;background:#ffffff;"></div>
<div class="r" style="left:162px;top:402px;width:134px;height:20px;background:#ffffff;"></div>
<div class="r" style="left:297px;top:402px;width:576px;height:20px;background:#ffffff;"></div>
<div class="r" style="left:874px;top:402px;width:288px;height:20px;background:#ffffff;"></div>
<div class="r" style="left:1163px;top:402px;width:154px;height:20px;background:#ffffff;"></div>
<div class="r" style="left:1318px;top:402px;width:154px;height:20px;background:#ffffff;"></div>
<div class="r" style="left:1473px;top:402px;width:101px;height:20px;background:#ffffff;"></div>
<div class="r" style="left:1575px;top:402px;width:64px;height:20px;background:#ffffff;"></div>
<span class="t" style="left:144.09765625px;top:406.52px;font-size:12.5px;font-weight:normal;color:#ff0000;transform:scaleX(0.9200);transform-origin:right top;">10</span>
<span class="t" style="left:165px;top:406.52px;font-size:12.5px;font-weight:normal;color:#ff0000;transform:scaleX(0.9444);transform-origin:left top;">08/11/2024</span>
<span class="t" style="left:300px;top:406.52px;font-size:12.5px;font-weight:normal;color:#ff0000;transform:scaleX(0.8950);transform-origin:left top;">CONSUMIDOR FINAL</span>
<span class="t" style="left:877px;top:406.52px;font-size:12.5px;font-weight:normal;color:#ff0000;transform:scaleX(0.8573);transform-origin:left top;">LOJA</span>
<span class="t" style="left:1283.650390625px;top:406.52px;font-size:12.5px;font-weight:normal;color:#ff0000;transform:scaleX(0.8700);transform-origin:right top;">11,06</span>
<span class="t" style="left:1321px;top:406.52px;font-size:12.5px;font-weight:normal;color:#ff0000;transform:scaleX(0.8870);transform-origin:left top;">CANCELADO</span>
<span class="t" style="left:1476px;top:406.52px;font-size:12.5px;font-weight:normal;color:#ff0000;transform:scaleX(0.8550);transform-origin:left top;">VENDA</span>
<div class="r" style="left:14px;top:422px;width:12px;height:20px;background:#f5f8fc;"></div>
<div class="r" style="left:14px;top:442px;width:12px;height:1px;background:#dde5ee;"></div>
<div class="r" style="left:27px;top:422px;width:134px;height:20px;background:#e6eaee;"></div>
<div class="r" style="left:162px;top:422px;width:134px;height:20px;background:#e6eaee;"></div>
<div class="r" style="left:297px;top:422px;width:576px;height:20px;background:#e6eaee;"></div>
<div class="r" style="left:874px;top:422px;width:288px;height:20px;background:#e6eaee;"></div>
<div class="r" style="left:1163px;top:422px;width:154px;height:20px;background:#e6eaee;"></div>
<div class="r" style="left:1318px;top:422px;width:154px;height:20px;background:#e6eaee;"></div>
<div class="r" style="left:1473px;top:422px;width:101px;height:20px;background:#e6eaee;"></div>
<div class="r" style="left:1575px;top:422px;width:64px;height:20px;background:#e6eaee;"></div>
<span class="t" style="left:151.048828125px;top:426.52px;font-size:12.5px;font-weight:normal;color:#ff0000;transform:scaleX(0.9200);transform-origin:right top;">9</span>
<span class="t" style="left:165px;top:426.52px;font-size:12.5px;font-weight:normal;color:#ff0000;transform:scaleX(0.9444);transform-origin:left top;">08/11/2024</span>
<span class="t" style="left:300px;top:426.52px;font-size:12.5px;font-weight:normal;color:#ff0000;transform:scaleX(0.8950);transform-origin:left top;">CONSUMIDOR FINAL</span>
<span class="t" style="left:877px;top:426.52px;font-size:12.5px;font-weight:normal;color:#ff0000;transform:scaleX(0.8573);transform-origin:left top;">LOJA</span>
<span class="t" style="left:1289.673828125px;top:426.52px;font-size:12.5px;font-weight:normal;color:#ff0000;transform:scaleX(0.8700);transform-origin:right top;">0,00</span>
<span class="t" style="left:1321px;top:426.52px;font-size:12.5px;font-weight:normal;color:#ff0000;transform:scaleX(0.8870);transform-origin:left top;">CANCELADO</span>
<span class="t" style="left:1476px;top:426.52px;font-size:12.5px;font-weight:normal;color:#ff0000;transform:scaleX(0.8550);transform-origin:left top;">VENDA</span>
<div class="r" style="left:14px;top:442px;width:12px;height:20px;background:#f5f8fc;"></div>
<div class="r" style="left:14px;top:462px;width:12px;height:1px;background:#dde5ee;"></div>
<div class="r" style="left:27px;top:442px;width:134px;height:20px;background:#ffffff;"></div>
<div class="r" style="left:162px;top:442px;width:134px;height:20px;background:#ffffff;"></div>
<div class="r" style="left:297px;top:442px;width:576px;height:20px;background:#ffffff;"></div>
<div class="r" style="left:874px;top:442px;width:288px;height:20px;background:#ffffff;"></div>
<div class="r" style="left:1163px;top:442px;width:154px;height:20px;background:#ffffff;"></div>
<div class="r" style="left:1318px;top:442px;width:154px;height:20px;background:#ffffff;"></div>
<div class="r" style="left:1473px;top:442px;width:101px;height:20px;background:#ffffff;"></div>
<div class="r" style="left:1575px;top:442px;width:64px;height:20px;background:#ffffff;"></div>
<span class="t" style="left:151.048828125px;top:446.52px;font-size:12.5px;font-weight:normal;color:#ff0000;transform:scaleX(0.9200);transform-origin:right top;">8</span>
<span class="t" style="left:165px;top:446.52px;font-size:12.5px;font-weight:normal;color:#ff0000;transform:scaleX(0.9444);transform-origin:left top;">08/11/2024</span>
<span class="t" style="left:300px;top:446.52px;font-size:12.5px;font-weight:normal;color:#ff0000;transform:scaleX(0.8950);transform-origin:left top;">CONSUMIDOR FINAL</span>
<span class="t" style="left:877px;top:446.52px;font-size:12.5px;font-weight:normal;color:#ff0000;transform:scaleX(0.8573);transform-origin:left top;">LOJA</span>
<span class="t" style="left:1282.72265625px;top:446.52px;font-size:12.5px;font-weight:normal;color:#ff0000;transform:scaleX(0.8700);transform-origin:right top;">52,00</span>
<span class="t" style="left:1321px;top:446.52px;font-size:12.5px;font-weight:normal;color:#ff0000;transform:scaleX(0.8870);transform-origin:left top;">CANCELADO</span>
<span class="t" style="left:1476px;top:446.52px;font-size:12.5px;font-weight:normal;color:#ff0000;transform:scaleX(0.8550);transform-origin:left top;">VENDA</span>
<div class="r" style="left:14px;top:462px;width:12px;height:20px;background:#f5f8fc;"></div>
<div class="r" style="left:14px;top:482px;width:12px;height:1px;background:#dde5ee;"></div>
<div class="r" style="left:27px;top:462px;width:134px;height:20px;background:#e6eaee;"></div>
<div class="r" style="left:162px;top:462px;width:134px;height:20px;background:#e6eaee;"></div>
<div class="r" style="left:297px;top:462px;width:576px;height:20px;background:#e6eaee;"></div>
<div class="r" style="left:874px;top:462px;width:288px;height:20px;background:#e6eaee;"></div>
<div class="r" style="left:1163px;top:462px;width:154px;height:20px;background:#e6eaee;"></div>
<div class="r" style="left:1318px;top:462px;width:154px;height:20px;background:#e6eaee;"></div>
<div class="r" style="left:1473px;top:462px;width:101px;height:20px;background:#e6eaee;"></div>
<div class="r" style="left:1575px;top:462px;width:64px;height:20px;background:#e6eaee;"></div>
<span class="t" style="left:151.048828125px;top:466.52px;font-size:12.5px;font-weight:normal;color:#000;transform:scaleX(0.9200);transform-origin:right top;">7</span>
<span class="t" style="left:165px;top:466.52px;font-size:12.5px;font-weight:normal;color:#000;transform:scaleX(0.9444);transform-origin:left top;">07/11/2024</span>
<span class="t" style="left:300px;top:466.52px;font-size:12.5px;font-weight:normal;color:#000;transform:scaleX(0.8950);transform-origin:left top;">CONSUMIDOR FINAL</span>
<span class="t" style="left:877px;top:466.52px;font-size:12.5px;font-weight:normal;color:#000;transform:scaleX(0.8573);transform-origin:left top;">LOJA</span>
<span class="t" style="left:1289.673828125px;top:466.52px;font-size:12.5px;font-weight:normal;color:#000;transform:scaleX(0.8700);transform-origin:right top;">0,00</span>
<span class="t" style="left:1321px;top:466.52px;font-size:12.5px;font-weight:normal;color:#000;transform:scaleX(0.8870);transform-origin:left top;">EM ABERTO</span>
<span class="t" style="left:1476px;top:466.52px;font-size:12.5px;font-weight:normal;color:#000;transform:scaleX(0.8550);transform-origin:left top;">VENDA</span>
<div class="r" style="left:14px;top:482px;width:12px;height:20px;background:#f5f8fc;"></div>
<div class="r" style="left:14px;top:502px;width:12px;height:1px;background:#dde5ee;"></div>
<div class="r" style="left:27px;top:482px;width:134px;height:20px;background:#ffffff;"></div>
<div class="r" style="left:162px;top:482px;width:134px;height:20px;background:#ffffff;"></div>
<div class="r" style="left:297px;top:482px;width:576px;height:20px;background:#ffffff;"></div>
<div class="r" style="left:874px;top:482px;width:288px;height:20px;background:#ffffff;"></div>
<div class="r" style="left:1163px;top:482px;width:154px;height:20px;background:#ffffff;"></div>
<div class="r" style="left:1318px;top:482px;width:154px;height:20px;background:#ffffff;"></div>
<div class="r" style="left:1473px;top:482px;width:101px;height:20px;background:#ffffff;"></div>
<div class="r" style="left:1575px;top:482px;width:64px;height:20px;background:#ffffff;"></div>
<span class="t" style="left:151.048828125px;top:486.52px;font-size:12.5px;font-weight:normal;color:#ff0000;transform:scaleX(0.9200);transform-origin:right top;">6</span>
<span class="t" style="left:165px;top:486.52px;font-size:12.5px;font-weight:normal;color:#ff0000;transform:scaleX(0.9444);transform-origin:left top;">08/11/2024</span>
<span class="t" style="left:300px;top:486.52px;font-size:12.5px;font-weight:normal;color:#ff0000;transform:scaleX(0.8950);transform-origin:left top;">CONSUMIDOR FINAL</span>
<span class="t" style="left:877px;top:486.52px;font-size:12.5px;font-weight:normal;color:#ff0000;transform:scaleX(0.8573);transform-origin:left top;">LOJA</span>
<span class="t" style="left:1282.72265625px;top:486.52px;font-size:12.5px;font-weight:normal;color:#ff0000;transform:scaleX(0.8700);transform-origin:right top;">84,00</span>
<span class="t" style="left:1321px;top:486.52px;font-size:12.5px;font-weight:normal;color:#ff0000;transform:scaleX(0.8870);transform-origin:left top;">CANCELADO</span>
<span class="t" style="left:1476px;top:486.52px;font-size:12.5px;font-weight:normal;color:#ff0000;transform:scaleX(0.8550);transform-origin:left top;">VENDA</span>
<div class="r" style="left:14px;top:502px;width:12px;height:20px;background:#f5f8fc;"></div>
<div class="r" style="left:14px;top:522px;width:12px;height:1px;background:#dde5ee;"></div>
<div class="r" style="left:27px;top:502px;width:134px;height:20px;background:#e6eaee;"></div>
<div class="r" style="left:162px;top:502px;width:134px;height:20px;background:#e6eaee;"></div>
<div class="r" style="left:297px;top:502px;width:576px;height:20px;background:#e6eaee;"></div>
<div class="r" style="left:874px;top:502px;width:288px;height:20px;background:#e6eaee;"></div>
<div class="r" style="left:1163px;top:502px;width:154px;height:20px;background:#e6eaee;"></div>
<div class="r" style="left:1318px;top:502px;width:154px;height:20px;background:#e6eaee;"></div>
<div class="r" style="left:1473px;top:502px;width:101px;height:20px;background:#e6eaee;"></div>
<div class="r" style="left:1575px;top:502px;width:64px;height:20px;background:#e6eaee;"></div>
<span class="t" style="left:151.048828125px;top:506.52px;font-size:12.5px;font-weight:normal;color:#0b7d12;transform:scaleX(0.9200);transform-origin:right top;">5</span>
<span class="t" style="left:165px;top:506.52px;font-size:12.5px;font-weight:normal;color:#0b7d12;transform:scaleX(0.9304);transform-origin:left top;">29/10/2024</span>
<span class="t" style="left:300px;top:506.52px;font-size:12.5px;font-weight:normal;color:#0b7d12;transform:scaleX(0.8950);transform-origin:left top;">CONSUMIDOR FINAL</span>
<span class="t" style="left:877px;top:506.52px;font-size:12.5px;font-weight:normal;color:#0b7d12;transform:scaleX(0.8573);transform-origin:left top;">LOJA</span>
<span class="t" style="left:1275.771484375px;top:506.52px;font-size:12.5px;font-weight:normal;color:#0b7d12;transform:scaleX(0.8700);transform-origin:right top;">108,90</span>
<span class="t" style="left:1321px;top:506.52px;font-size:12.5px;font-weight:normal;color:#0b7d12;transform:scaleX(0.8870);transform-origin:left top;">FECHADO</span>
<span class="t" style="left:1476px;top:506.52px;font-size:12.5px;font-weight:normal;color:#0b7d12;transform:scaleX(0.8550);transform-origin:left top;">VENDA</span>
<div class="r" style="left:14px;top:522px;width:12px;height:20px;background:#f5f8fc;"></div>
<div class="r" style="left:14px;top:542px;width:12px;height:1px;background:#dde5ee;"></div>
<div class="r" style="left:27px;top:522px;width:134px;height:20px;background:#ffffff;"></div>
<div class="r" style="left:162px;top:522px;width:134px;height:20px;background:#ffffff;"></div>
<div class="r" style="left:297px;top:522px;width:576px;height:20px;background:#ffffff;"></div>
<div class="r" style="left:874px;top:522px;width:288px;height:20px;background:#ffffff;"></div>
<div class="r" style="left:1163px;top:522px;width:154px;height:20px;background:#ffffff;"></div>
<div class="r" style="left:1318px;top:522px;width:154px;height:20px;background:#ffffff;"></div>
<div class="r" style="left:1473px;top:522px;width:101px;height:20px;background:#ffffff;"></div>
<div class="r" style="left:1575px;top:522px;width:64px;height:20px;background:#ffffff;"></div>
<span class="t" style="left:151.048828125px;top:526.52px;font-size:12.5px;font-weight:normal;color:#0b7d12;transform:scaleX(0.9200);transform-origin:right top;">4</span>
<span class="t" style="left:165px;top:526.52px;font-size:12.5px;font-weight:normal;color:#0b7d12;transform:scaleX(0.9304);transform-origin:left top;">29/10/2024</span>
<span class="t" style="left:300px;top:526.52px;font-size:12.5px;font-weight:normal;color:#0b7d12;transform:scaleX(0.8950);transform-origin:left top;">CONSUMIDOR FINAL</span>
<span class="t" style="left:877px;top:526.52px;font-size:12.5px;font-weight:normal;color:#0b7d12;transform:scaleX(0.8573);transform-origin:left top;">LOJA</span>
<span class="t" style="left:1275.771484375px;top:526.52px;font-size:12.5px;font-weight:normal;color:#0b7d12;transform:scaleX(0.8700);transform-origin:right top;">127,80</span>
<span class="t" style="left:1321px;top:526.52px;font-size:12.5px;font-weight:normal;color:#0b7d12;transform:scaleX(0.8870);transform-origin:left top;">FECHADO</span>
<span class="t" style="left:1476px;top:526.52px;font-size:12.5px;font-weight:normal;color:#0b7d12;transform:scaleX(0.8550);transform-origin:left top;">VENDA</span>
<div class="r" style="left:14px;top:542px;width:12px;height:20px;background:#f5f8fc;"></div>
<div class="r" style="left:14px;top:562px;width:12px;height:1px;background:#dde5ee;"></div>
<div class="r" style="left:27px;top:542px;width:134px;height:20px;background:#e6eaee;"></div>
<div class="r" style="left:162px;top:542px;width:134px;height:20px;background:#e6eaee;"></div>
<div class="r" style="left:297px;top:542px;width:576px;height:20px;background:#e6eaee;"></div>
<div class="r" style="left:874px;top:542px;width:288px;height:20px;background:#e6eaee;"></div>
<div class="r" style="left:1163px;top:542px;width:154px;height:20px;background:#e6eaee;"></div>
<div class="r" style="left:1318px;top:542px;width:154px;height:20px;background:#e6eaee;"></div>
<div class="r" style="left:1473px;top:542px;width:101px;height:20px;background:#e6eaee;"></div>
<div class="r" style="left:1575px;top:542px;width:64px;height:20px;background:#e6eaee;"></div>
<span class="t" style="left:151.048828125px;top:546.52px;font-size:12.5px;font-weight:normal;color:#000;transform:scaleX(0.9200);transform-origin:right top;">3</span>
<span class="t" style="left:165px;top:546.52px;font-size:12.5px;font-weight:normal;color:#000;transform:scaleX(0.9304);transform-origin:left top;">19/10/2024</span>
<span class="t" style="left:300px;top:546.52px;font-size:12.5px;font-weight:normal;color:#000;transform:scaleX(0.8950);transform-origin:left top;">CONSUMIDOR FINAL</span>
<span class="t" style="left:877px;top:546.52px;font-size:12.5px;font-weight:normal;color:#000;transform:scaleX(0.8573);transform-origin:left top;">LOJA</span>
<span class="t" style="left:1289.673828125px;top:546.52px;font-size:12.5px;font-weight:normal;color:#000;transform:scaleX(0.8700);transform-origin:right top;">0,00</span>
<span class="t" style="left:1321px;top:546.52px;font-size:12.5px;font-weight:normal;color:#000;transform:scaleX(0.8870);transform-origin:left top;">EM ABERTO</span>
<span class="t" style="left:1476px;top:546.52px;font-size:12.5px;font-weight:normal;color:#000;transform:scaleX(0.8550);transform-origin:left top;">PEDIDO</span>
<div class="r" style="left:14px;top:562px;width:12px;height:20px;background:#f5f8fc;"></div>
<div class="r" style="left:14px;top:582px;width:12px;height:1px;background:#dde5ee;"></div>
<div class="r" style="left:27px;top:562px;width:134px;height:20px;background:#ffffff;"></div>
<div class="r" style="left:162px;top:562px;width:134px;height:20px;background:#ffffff;"></div>
<div class="r" style="left:297px;top:562px;width:576px;height:20px;background:#ffffff;"></div>
<div class="r" style="left:874px;top:562px;width:288px;height:20px;background:#ffffff;"></div>
<div class="r" style="left:1163px;top:562px;width:154px;height:20px;background:#ffffff;"></div>
<div class="r" style="left:1318px;top:562px;width:154px;height:20px;background:#ffffff;"></div>
<div class="r" style="left:1473px;top:562px;width:101px;height:20px;background:#ffffff;"></div>
<div class="r" style="left:1575px;top:562px;width:64px;height:20px;background:#ffffff;"></div>
<span class="t" style="left:151.048828125px;top:566.52px;font-size:12.5px;font-weight:normal;color:#0b7d12;transform:scaleX(0.9200);transform-origin:right top;">2</span>
<span class="t" style="left:165px;top:566.52px;font-size:12.5px;font-weight:normal;color:#0b7d12;transform:scaleX(0.9304);transform-origin:left top;">24/10/2024</span>
<span class="t" style="left:300px;top:566.52px;font-size:12.5px;font-weight:normal;color:#0b7d12;transform:scaleX(0.8950);transform-origin:left top;">CONSUMIDOR FINAL</span>
<span class="t" style="left:877px;top:566.52px;font-size:12.5px;font-weight:normal;color:#0b7d12;transform:scaleX(0.8573);transform-origin:left top;">LOJA</span>
<span class="t" style="left:1282.72265625px;top:566.52px;font-size:12.5px;font-weight:normal;color:#0b7d12;transform:scaleX(0.8700);transform-origin:right top;">14,00</span>
<span class="t" style="left:1321px;top:566.52px;font-size:12.5px;font-weight:normal;color:#0b7d12;transform:scaleX(0.8870);transform-origin:left top;">FECHADO</span>
<span class="t" style="left:1476px;top:566.52px;font-size:12.5px;font-weight:normal;color:#0b7d12;transform:scaleX(0.8550);transform-origin:left top;">VENDA</span>
<div class="r" style="left:14px;top:582px;width:12px;height:20px;background:#f5f8fc;"></div>
<div class="r" style="left:14px;top:602px;width:12px;height:1px;background:#dde5ee;"></div>
<div class="r" style="left:27px;top:582px;width:134px;height:20px;background:#e6eaee;"></div>
<div class="r" style="left:162px;top:582px;width:134px;height:20px;background:#e6eaee;"></div>
<div class="r" style="left:297px;top:582px;width:576px;height:20px;background:#e6eaee;"></div>
<div class="r" style="left:874px;top:582px;width:288px;height:20px;background:#e6eaee;"></div>
<div class="r" style="left:1163px;top:582px;width:154px;height:20px;background:#e6eaee;"></div>
<div class="r" style="left:1318px;top:582px;width:154px;height:20px;background:#e6eaee;"></div>
<div class="r" style="left:1473px;top:582px;width:101px;height:20px;background:#e6eaee;"></div>
<div class="r" style="left:1575px;top:582px;width:64px;height:20px;background:#e6eaee;"></div>
<span class="t" style="left:151.048828125px;top:586.52px;font-size:12.5px;font-weight:normal;color:#ff0000;transform:scaleX(0.9200);transform-origin:right top;">1</span>
<span class="t" style="left:165px;top:586.52px;font-size:12.5px;font-weight:normal;color:#ff0000;transform:scaleX(0.9304);transform-origin:left top;">18/10/2024</span>
<span class="t" style="left:300px;top:586.52px;font-size:12.5px;font-weight:normal;color:#ff0000;transform:scaleX(0.8950);transform-origin:left top;">CONSUMIDOR FINAL</span>
<span class="t" style="left:877px;top:586.52px;font-size:12.5px;font-weight:normal;color:#ff0000;transform:scaleX(0.8573);transform-origin:left top;">LOJA</span>
<span class="t" style="left:1282.72265625px;top:586.52px;font-size:12.5px;font-weight:normal;color:#ff0000;transform:scaleX(0.8700);transform-origin:right top;">14,00</span>
<span class="t" style="left:1321px;top:586.52px;font-size:12.5px;font-weight:normal;color:#ff0000;transform:scaleX(0.8870);transform-origin:left top;">CANCELADO</span>
<span class="t" style="left:1476px;top:586.52px;font-size:12.5px;font-weight:normal;color:#ff0000;transform:scaleX(0.8550);transform-origin:left top;">VENDA</span>
<svg class="r" style="left:16px;top:265px" width="8" height="14" viewBox="0 0 8 14"><path d="M1.5 1.5 L6.5 7 L1.5 12.5" fill="none" stroke="#5a6a8a" stroke-width="1.2"/></svg>
<svg class="r" style="left:122px;top:785px" width="48" height="19" viewBox="0 0 48 19"><path d="M0 0 L47 0 L41.2 17 Q40.8 18 39.8 18 L7.2 18 Q6.2 18 5.8 17 Z" fill="#4296e8"/></svg>
<span class="t" style="left:27px;top:788.84px;font-size:12px;font-weight:normal;color:#000;transform:scaleX(0.9570);transform-origin:left top;">Pedidos</span>
<span class="t" style="left:79.5px;top:788.84px;font-size:12px;font-weight:normal;color:#000;transform:scaleX(1.0082);transform-origin:left top;">Cupom</span>
<span class="t" style="left:129.3px;top:788.84px;font-size:12px;font-weight:normal;color:#fff;transform:scaleX(0.9557);transform-origin:left top;">Todos</span>
<span class="t" style="left:17px;top:825.00px;font-size:15px;font-weight:normal;color:#000;transform:scaleX(0.9797);transform-origin:left top;-webkit-text-stroke:0.5px #000;">TOTAL</span>
<div class="r" style="left:72px;top:826px;width:2px;height:15px;background:#000;"></div>
<span class="t" style="left:84.5px;top:825.00px;font-size:15px;font-weight:normal;color:#000;transform:scaleX(0.9421);transform-origin:left top;-webkit-text-stroke:0.5px #000;">1.912,48</span>
<div class="r" style="left:5px;top:846px;width:1908px;height:67px;border:1px solid #c4d0dc;box-sizing:border-box;"></div>
<div class="r" style="left:13px;top:854px;width:135px;height:50px;background:#575757;border:1px solid #3a3a3a;box-sizing:border-box;border-radius:4px;"></div>
<div class="r" style="left:155px;top:854px;width:135px;height:50px;background:#575757;border:1px solid #3a3a3a;box-sizing:border-box;border-radius:4px;"></div>
<div class="r" style="left:297px;top:854px;width:135px;height:50px;background:#575757;border:1px solid #3a3a3a;box-sizing:border-box;border-radius:4px;"></div>
<div class="r" style="left:439px;top:854px;width:135px;height:50px;background:#575757;border:1px solid #3a3a3a;box-sizing:border-box;border-radius:4px;"></div>
<div class="r" style="left:581px;top:854px;width:135px;height:50px;background:#575757;border:1px solid #3a3a3a;box-sizing:border-box;border-radius:4px;"></div>
<div class="r" style="left:723px;top:854px;width:135px;height:50px;background:#575757;border:1px solid #3a3a3a;box-sizing:border-box;border-radius:4px;"></div>
<div class="r" style="left:865px;top:854px;width:135px;height:50px;background:#575757;border:1px solid #3a3a3a;box-sizing:border-box;border-radius:4px;"></div>
<div class="r" style="left:1007px;top:854px;width:135px;height:50px;background:#575757;border:1px solid #3a3a3a;box-sizing:border-box;border-radius:4px;"></div>
<svg class="r" style="left:32px;top:865px" width="28" height="28" viewBox="0 0 28 28"><defs><linearGradient id="gb" x1="0" y1="0" x2="0" y2="1"><stop offset="0" stop-color="#d4ecf8"/><stop offset="0.45" stop-color="#a8d0ee"/><stop offset="0.5" stop-color="#7fb3e4"/><stop offset="1" stop-color="#6aa2dc"/></linearGradient></defs><circle cx="14" cy="14" r="13.3" fill="url(#gb)" stroke="#3d72bd" stroke-width="1.1"/><path d="M11.5 6.6 Q11.5 5.6 12.5 5.6 L15.5 5.6 Q16.5 5.6 16.5 6.6 L16.5 11.3 L21.2 11.3 Q22.2 11.3 22.2 12.3 L22.2 15.3 Q22.2 16.3 21.2 16.3 L16.5 16.3 L16.5 21 Q16.5 22 15.5 22 L12.5 22 Q11.5 22 11.5 21 L11.5 16.3 L6.8 16.3 Q5.8 16.3 5.8 15.3 L5.8 12.3 Q5.8 11.3 6.8 11.3 L11.5 11.3 Z" fill="#eef2f8" stroke="#2b5b9e" stroke-width="1.1"/></svg>
<span class="t" style="left:66.4px;top:871.30px;font-size:15px;font-weight:normal;color:#e6e6e6;transform:scaleX(0.9719);transform-origin:left top;">F2 - Novo</span>
<svg class="r" style="left:160px;top:858px" width="42" height="40" viewBox="0 0 42 40"><rect x="9.2" y="7" width="24.7" height="20.7" fill="#eef0f8" stroke="#6a80c0" stroke-width="0.8"/><rect x="9.6" y="7.4" width="16.2" height="15.1" fill="#8ec0e8"/><path d="M9.2 12.2 H33.9 M9.2 17.4 H33.9 M9.2 22.5 H33.9 M17.5 7 V27.7 M25.8 7 V27.7" stroke="#5a80c0" stroke-width="0.8"/><path d="M37.8 15.8 L27 26.3" stroke="#d8402c" stroke-width="4" stroke-linecap="round"/><path d="M37 16.5 L27.5 25.8" stroke="#f0a090" stroke-width="0.8" stroke-dasharray="0.8 0.8"/><path d="M27.5 25.8 L23.5 29.6" stroke="#b8c4d8" stroke-width="3.2"/><ellipse cx="21.6" cy="31" rx="3.6" ry="2.8" transform="rotate(-45 21.6 31)" fill="#e89a28"/><path d="M19.5 32.5 Q17 33.5 16.5 35 Q19.5 35 21 33.5 Z" fill="#3a6ac8"/></svg>
<span class="t" style="left:203.6px;top:871.30px;font-size:15px;font-weight:normal;color:#e6e6e6;transform:scaleX(0.9922);transform-origin:left top;">F5 - Alterar</span>
<svg class="r" style="left:305px;top:865px" width="28" height="28" viewBox="0 0 28 28"><defs><linearGradient id="gr" x1="0" y1="0" x2="0" y2="1"><stop offset="0" stop-color="#f2b0a0"/><stop offset="0.42" stop-color="#e2705a"/><stop offset="0.48" stop-color="#d8503a"/><stop offset="1" stop-color="#c02c1e"/></linearGradient></defs><circle cx="13.8" cy="13.9" r="13.2" fill="url(#gr)" stroke="#a8201a" stroke-width="0.9"/><path d="M9.6 7.6 L13.8 11.2 L18 7.6 L20.6 10.2 L17 14 L20.6 17.8 L18 20.4 L13.8 16.8 L9.6 20.4 L7 17.8 L10.6 14 L7 10.2 Z" fill="#e8f0f8" stroke="#a83028" stroke-width="0.9" stroke-linejoin="round"/></svg>
<span class="t" style="left:339.6px;top:871.30px;font-size:15px;font-weight:normal;color:#e6e6e6;transform:scaleX(0.9355);transform-origin:left top;">F4 - Cancelar</span>
<svg class="r" style="left:440px;top:858px" width="40" height="40" viewBox="0 0 40 40"><defs><linearGradient id="ga" x1="0" y1="0" x2="0" y2="1"><stop offset="0" stop-color="#d8f0a0"/><stop offset="1" stop-color="#86bc2a"/></linearGradient><linearGradient id="gbl" x1="0" y1="0" x2="0" y2="1"><stop offset="0" stop-color="#d8ecfa"/><stop offset="1" stop-color="#7eb2e6"/></linearGradient></defs><path d="M6.6 24.2 Q6 10.6 22.2 10.3 L22.2 6.2 L33.7 12.7 L23 19.7 L23 15.6 Q12 15.6 11.1 22.2 Z" fill="url(#ga)" stroke="#5a8c1c" stroke-width="0.8" stroke-linejoin="round"/><path d="M33.7 16.4 Q34.5 29.8 17.7 30.5 L17.7 34.9 L6.2 28.3 L17.7 21.4 L17.7 25.5 Q28 25 29 18.8 Z" fill="url(#gbl)" stroke="#3a6ab8" stroke-width="0.8" stroke-linejoin="round"/></svg>
<span class="t" style="left:480.4px;top:871.30px;font-size:15px;font-weight:normal;color:#e6e6e6;transform:scaleX(0.9846);transform-origin:left top;">F5 - Atualizar</span>
<svg class="r" style="left:582px;top:858px" width="40" height="40" viewBox="0 0 40 40"><defs><linearGradient id="gp" x1="0" y1="0" x2="1" y2="0"><stop offset="0" stop-color="#c8d0de"/><stop offset="0.15" stop-color="#f4f6fa"/><stop offset="0.85" stop-color="#eef1f6"/><stop offset="1" stop-color="#aeb8cc"/></linearGradient></defs><rect x="12.3" y="5.1" width="17.5" height="13" fill="#eceff5" stroke="#8d9cc0" stroke-width="0.7"/><rect x="6.2" y="14.2" width="29.7" height="17.4" rx="2.6" fill="url(#gp)" stroke="#6e7eaa" stroke-width="0.7"/><path d="M10.3 17.2 L31.2 17.2 L31.2 20.6 Q31.2 22.6 29.2 22.6 L12.3 22.6 Q10.3 22.6 10.3 20.6 Z" fill="#5a6c92"/><rect x="11.3" y="26.6" width="19.3" height="1.3" fill="#44557a"/><rect x="12.5" y="27.5" width="17.1" height="7.4" fill="#f4f6fa" stroke="#7080a8" stroke-width="0.6"/><rect x="13.8" y="28" width="14.4" height="4.7" fill="#6ab0e8"/></svg>
<span class="t" style="left:623px;top:871.30px;font-size:15px;font-weight:normal;color:#e6e6e6;">F6 - Imprimir</span>
<svg class="r" style="left:720px;top:860px" width="40" height="36" viewBox="0 0 40 36"><rect x="6.1" y="6.3" width="25.7" height="18.3" rx="1.5" fill="#eceef4" stroke="#8090c0" stroke-width="0.6"/><path d="M6.6 7 L17 15.2 L31.2 7" fill="#f8f9fc" stroke="#5a6cb0" stroke-width="0.8"/><path d="M6.6 23.8 L14 16" stroke="#8a9ac8" stroke-width="0.6"/><g fill="#d83a2a"><rect x="6.1" y="10" width="1.3" height="2.4"/><rect x="6.1" y="20.5" width="1.3" height="2.4"/><rect x="13" y="23.3" width="2.4" height="1.3"/><rect x="30.3" y="7" width="1.5" height="2.6"/></g><g fill="#3a6ac8"><rect x="6.1" y="15.3" width="1.3" height="2.4"/><rect x="9" y="23.3" width="2.4" height="1.3"/></g><rect x="17.4" y="12" width="17.4" height="19.6" fill="#fbfcfe" stroke="#6a80b8" stroke-width="0.9"/><g fill="#a6b6d8"><rect x="20.1" y="15" width="11.9" height="2.7"/><rect x="20.1" y="19" width="2.6" height="2.6"/><rect x="24.2" y="19" width="7.8" height="2.6"/><rect x="20.1" y="23.1" width="11.9" height="5.7"/></g></svg>
<span class="t" style="left:760.6px;top:871.30px;font-size:15px;font-weight:normal;color:#e6e6e6;transform:scaleX(0.9658);transform-origin:left top;">F9 - Whatsapp</span>
<svg class="r" style="left:877px;top:860px" width="40" height="36" viewBox="0 0 40 36"><rect x="6.1" y="6.3" width="25.7" height="18.3" rx="1.5" fill="#eceef4" stroke="#8090c0" stroke-width="0.6"/><path d="M6.6 7 L17 15.2 L31.2 7" fill="#f8f9fc" stroke="#5a6cb0" stroke-width="0.8"/><path d="M6.6 23.8 L14 16" stroke="#8a9ac8" stroke-width="0.6"/><g fill="#d83a2a"><rect x="6.1" y="10" width="1.3" height="2.4"/><rect x="6.1" y="20.5" width="1.3" height="2.4"/><rect x="13" y="23.3" width="2.4" height="1.3"/><rect x="30.3" y="7" width="1.5" height="2.6"/></g><g fill="#3a6ac8"><rect x="6.1" y="15.3" width="1.3" height="2.4"/><rect x="9" y="23.3" width="2.4" height="1.3"/></g><rect x="17.4" y="12" width="17.4" height="19.6" fill="#fbfcfe" stroke="#6a80b8" stroke-width="0.9"/><g fill="#a6b6d8"><rect x="20.1" y="15" width="11.9" height="2.7"/><rect x="20.1" y="19" width="2.6" height="2.6"/><rect x="24.2" y="19" width="7.8" height="2.6"/><rect x="20.1" y="23.1" width="11.9" height="5.7"/></g></svg>
<span class="t" style="left:917px;top:871.30px;font-size:15px;font-weight:normal;color:#e6e6e6;transform:scaleX(0.9511);transform-origin:left top;">F9 - Email</span>
<svg class="r" style="left:1038px;top:866px" width="26" height="26" viewBox="0 0 26 26"><defs><linearGradient id="gx" x1="0" y1="0" x2="0" y2="1"><stop offset="0" stop-color="#f08878"/><stop offset="0.3" stop-color="#d84a3a"/><stop offset="1" stop-color="#b8201a"/></linearGradient></defs><rect x="0.5" y="0.5" width="25" height="25" rx="1.8" fill="url(#gx)" stroke="#a01a14" stroke-width="0.6"/><path d="M8.2 6.6 L13 11.2 L17.8 6.6 L20 8.8 L15.3 13.4 L20 18 L17.8 20.2 L13 15.6 L8.2 20.2 L6 18 L10.7 13.4 L6 8.8 Z" fill="#f2f4fa" stroke="#9aa8c0" stroke-width="0.5" stroke-linejoin="round"/></svg>
<span class="t" style="left:1070.8px;top:871.30px;font-size:15px;font-weight:normal;color:#e6e6e6;transform:scaleX(0.9212);transform-origin:left top;">Fechar</span>
<div class="r" style="left:5px;top:912px;width:1908px;height:18px;background:#2a2a2a;"></div>
<span class="t" style="left:54px;top:916.44px;font-size:12px;font-weight:normal;color:#f0f0f0;transform:scaleX(0.9690);transform-origin:left top;-webkit-text-stroke:0.35px #f0f0f0;">Você está na tela de Pedido de Vendas</span>
<span class="t" style="left:328px;top:916.44px;font-size:12px;font-weight:normal;color:#f0f0f0;transform:scaleX(0.9291);transform-origin:left top;-webkit-text-stroke:0.35px #f0f0f0;">Empresa: JENNIFER E BERNARDO PADARIA LTDA</span>
<span class="t" style="left:645px;top:916.44px;font-size:12px;font-weight:normal;color:#f0f0f0;transform:scaleX(1.0114);transform-origin:left top;-webkit-text-stroke:0.35px #f0f0f0;">Usuário: ADMIN</span>
<span class="t" style="left:811px;top:916.44px;font-size:12px;font-weight:normal;color:#f0f0f0;transform:scaleX(0.9405);transform-origin:left top;-webkit-text-stroke:0.35px #f0f0f0;">IP: 10.0.2.15</span>
<span class="t" style="left:923px;top:916.44px;font-size:12px;font-weight:normal;color:#f0f0f0;transform:scaleX(1.0133);transform-origin:left top;-webkit-text-stroke:0.35px #f0f0f0;">Atualizado Em: 07/10/2025</span>
<span class="t" style="left:1077px;top:916.44px;font-size:12px;font-weight:normal;color:#f0f0f0;transform:scaleX(0.9292);transform-origin:left top;-webkit-text-stroke:0.35px #f0f0f0;">Versão: 6.4.1.1</span>
<span class="t" style="left:1231px;top:916.44px;font-size:12px;font-weight:normal;color:#f0f0f0;transform:scaleX(1.0073);transform-origin:left top;-webkit-text-stroke:0.35px #f0f0f0;">Licenciado: 16/10/2030</span>
<div class="r" style="left:0px;top:935px;width:1917px;height:39px;background:#232323;"></div>
<div class="r" style="left:0px;top:934px;width:1917px;height:1px;background:#8a97ad;"></div>
<svg class="r" style="left:0px;top:928px" width="6" height="8" viewBox="0 0 6 8"><path d="M0 0 L0 8 L6 8 Q1 7 0 0 Z" fill="#232323"/></svg>
<div class="r" style="left:47px;top:936px;width:288px;height:38px;background:#f0f0f0;"></div>
<div class="r" style="left:436px;top:935px;width:48px;height:39px;background:#4d4d4d;"></div>
<span class="t" style="left:87px;top:949.00px;font-size:15px;font-weight:normal;color:#333;transform:scaleX(0.9146);transform-origin:left top;">Pesquisar</span>
<svg class="r" style="left:15px;top:948px" width="17" height="17" viewBox="0 0 17 17"><path d="M0 2.3 L7 1.3 L7 7.8 L0 7.8 Z M8.2 1.1 L16.5 0 L16.5 7.8 L8.2 7.8 Z M0 9 L7 9 L7 15.5 L0 14.5 Z M8.2 9 L16.5 9 L16.5 17 L8.2 15.8 Z" fill="#fff"/></svg>
<svg class="r" style="left:58px;top:947px" width="19" height="19" viewBox="0 0 19 19"><circle cx="11.5" cy="7.3" r="5.8" fill="none" stroke="#1a1a1a" stroke-width="1.3"/><path d="M7.3 11.5 L1 17.8" stroke="#1a1a1a" stroke-width="1.4" stroke-linecap="round"/></svg>
<svg class="r" style="left:262px;top:943px" width="62" height="26" viewBox="0 0 62 26"><defs><linearGradient id="sy" x1="0" y1="0" x2="0" y2="1"><stop offset="0" stop-color="#ffd84a"/><stop offset="1" stop-color="#f0a010"/></linearGradient></defs><path d="M25.50 0.80 Q27.80 9.76 37.00 12.00 Q27.80 14.24 25.50 23.20 Q23.20 14.24 14.00 12.00 Q23.20 9.76 25.50 0.80 Z" fill="url(#sy)"/><path d="M48.50 10.90 Q49.62 15.38 54.10 16.50 Q49.62 17.62 48.50 22.10 Q47.38 17.62 42.90 16.50 Q47.38 15.38 48.50 10.90 Z" fill="url(#sy)"/><path d="M6.50 15.90 Q7.42 19.58 11.10 20.50 Q7.42 21.42 6.50 25.10 Q5.58 21.42 1.90 20.50 Q5.58 19.58 6.50 15.90 Z" fill="#2a9ff0"/><circle cx="41.5" cy="3.2" r="1.7" fill="#f0641e"/><circle cx="60" cy="22" r="1.5" fill="#7cc34a"/></svg>
<svg class="r" style="left:350px;top:945px" width="24" height="22" viewBox="0 0 24 22"><defs><linearGradient id="cp1" x1="0" y1="0" x2="0" y2="1"><stop offset="0" stop-color="#22aaf5"/><stop offset="0.5" stop-color="#3cb870"/><stop offset="1" stop-color="#f8c800"/></linearGradient><linearGradient id="cp2" x1="0" y1="0" x2="0" y2="1"><stop offset="0" stop-color="#b45cf5"/><stop offset="0.55" stop-color="#f05a8c"/><stop offset="1" stop-color="#ffb45a"/></linearGradient></defs><path d="M12 1.2 L15.8 1.2 Q17.2 1.2 17.8 3 L19 7 L14.5 7 Z" fill="#1d4fd8"/><path d="M6.5 14.5 L10.5 14.5 L12 21 L9.2 21 Q7.8 21 7.3 19.5 Z" fill="#f0582a"/><path d="M6 1.2 L13.2 1.2 L9.6 15 L2.4 15 Q0.9 15 1.3 13.5 L4.4 2.6 Q4.8 1.2 6 1.2 Z" fill="url(#cp1)"/><path d="M15.3 6.6 L22 6.6 Q23.6 6.6 23.1 8.2 L19.8 19.7 Q19.4 21 18 21 L11.2 21 Z" fill="url(#cp2)"/></svg>
<svg class="r" style="left:399px;top:946px" width="23" height="19" viewBox="0 0 23 19"><path d="M0.5 2 Q0.5 0.5 2 0.5 L8 0.5 L10 2.5 L21 2.5 Q22.5 2.5 22.5 4 L22.5 17.5 Q22.5 18.5 21.5 18.5 L1.5 18.5 Q0.5 18.5 0.5 17.5 Z" fill="#f9c93c"/><rect x="0.5" y="4.5" width="22" height="14" rx="1" fill="#fcd865"/><path d="M5 18.5 L5 11 Q5 9.5 6.5 9.5 L16.5 9.5 Q18 9.5 18 11 L18 18.5 L14.5 18.5 L14.5 14 L8.5 14 L8.5 18.5 Z" fill="#2d8ee6"/></svg>
<svg class="r" style="left:447px;top:943px" width="26" height="26" viewBox="0 0 26 26"><circle cx="13" cy="12.5" r="10.8" fill="#1e1e1e" stroke="#fff" stroke-width="2.4"/><circle cx="9.5" cy="10" r="1.2" fill="#14a8d0"/><circle cx="9.5" cy="15.5" r="1.2" fill="#14a8d0"/><path d="M13 5.8 Q15.2 5.8 15.2 7.8 L15.2 10.5 Q15.2 12.4 17.2 12.5 Q15.2 12.6 15.2 14.5 L15.2 17.2 Q15.2 19.2 13 19.2" fill="none" stroke="#14a8d0" stroke-width="1.5"/></svg>
<svg class="r" style="left:1705px;top:952px" width="15" height="9" viewBox="0 0 15 9"><path d="M1 8 L7.5 1.5 L14 8" fill="none" stroke="#fff" stroke-width="1.2"/></svg>
<svg class="r" style="left:1730px;top:947px" width="13" height="18" viewBox="0 0 13 18"><rect x="1" y="6" width="7.5" height="6.5" rx="1.5" fill="none" stroke="#fff" stroke-width="1"/><path d="M8.5 8 L11.5 6.5 L11.5 12 L8.5 10.5" fill="none" stroke="#fff" stroke-width="1"/><path d="M2 3 Q6 0.5 10 3 M2 15.5 Q6 18 10 15.5" fill="none" stroke="#fff" stroke-width="1"/></svg>
<svg class="r" style="left:1751px;top:949px" width="18" height="15" viewBox="0 0 18 15"><rect x="3.5" y="1.5" width="13.5" height="8.5" fill="none" stroke="#fff" stroke-width="1"/><path d="M10 10 L10 13 M6.5 13.5 L13.5 13.5 M2.5 1 L2.5 14" stroke="#fff" stroke-width="1"/><rect x="0.5" y="0.5" width="4" height="4" fill="#1c1c1c" stroke="#fff" stroke-width="0.9"/></svg>
<svg class="r" style="left:1775px;top:948px" width="19" height="17" viewBox="0 0 19 17"><path d="M1 6 L4 6 L8.5 1.5 L8.5 15 L4 10.5 L1 10.5 Z" fill="none" stroke="#fff" stroke-width="1"/><path d="M11 5.5 Q12.5 8.2 11 11 M13.5 3.5 Q16 8.2 13.5 13 M16 1.5 Q19.5 8.2 16 15" fill="none" stroke="#fff" stroke-width="1"/></svg>
<span class="t" style="left:1816.1321875px;top:940.84px;font-size:12px;font-weight:normal;color:#fff;transform:scaleX(0.9095);transform-origin:center top;">11:35</span>
<span class="t" style="left:1800.97375px;top:958.64px;font-size:12px;font-weight:normal;color:#fff;transform:scaleX(0.9658);transform-origin:center top;">27/10/2025</span>
<svg class="r" style="left:1877px;top:947px" width="18" height="18" viewBox="0 0 18 18"><path d="M1 1.5 L17 1.5 L17 13 L11 13 L9 15.5 L7 13 L1 13 Z" fill="none" stroke="#fff" stroke-width="1.1"/></svg>
<div class="r" style="left:1914px;top:935px;width:1px;height:39px;background:#5a5a5a;"></div>
</body></html>
